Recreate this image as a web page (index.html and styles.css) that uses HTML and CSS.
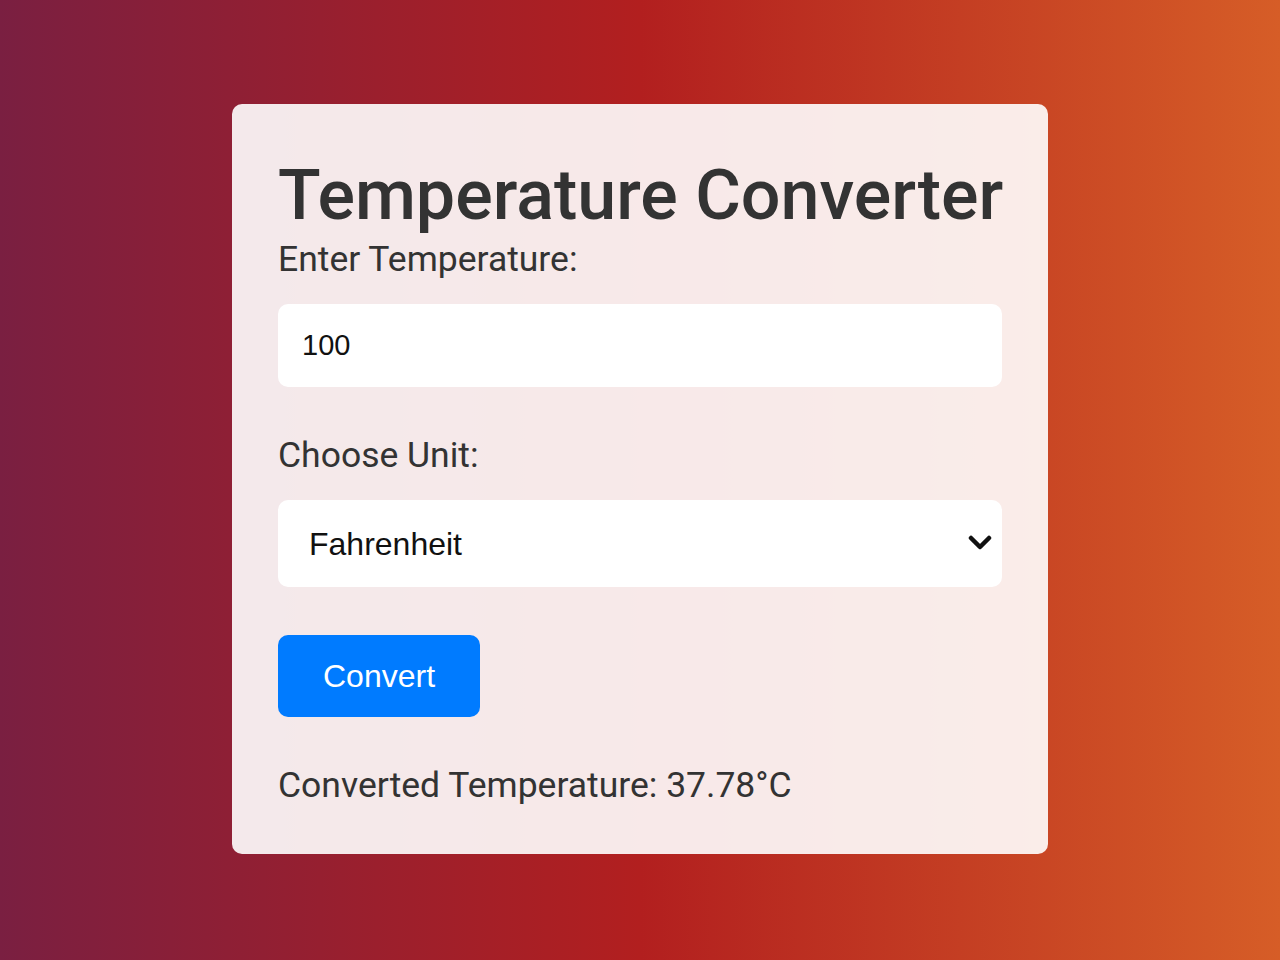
FILE: index.html
```html
<!DOCTYPE html>
<html lang="en">
<head>
    <meta charset="UTF-8">
    <meta name="viewport" content="width=device-width, initial-scale=1.0">
    <title>Temperature Converter</title>
    <link rel="stylesheet" href="styles.css">
</head>
<body>
    <div class="container">
        <h1>Temperature Converter</h1>
        <label for="temperature">Enter Temperature:</label>
        <input type="number" id="temperature" value="100">

        <label for="unit">Choose Unit:</label>
        <div class="select-wrap">
            <select id="unit">
                <option value="celsius">Celsius</option>
                <option value="fahrenheit" selected>Fahrenheit</option>
                <option value="kelvin">Kelvin</option>
            </select>
            <svg class="chevron" width="24" height="16" viewBox="0 0 24 16">
                <path d="M3 3 L12 12 L21 3" fill="none" stroke="#111" stroke-width="4.5" stroke-linecap="round" stroke-linejoin="round"/>
            </svg>
        </div>

        <button id="convert">Convert</button>

        <p id="result">Converted Temperature: 37.78°C</p>
    </div>
</body>
</html>
```

FILE: styles.css
```css
body {
    margin: 0;
    min-height: 960px;
    font-family: Roboto, "Liberation Sans", sans-serif;
    background: linear-gradient(to right, #7a1f41 0%, #b21f1f 50%, #d65d27 100%);
    color: #333;
}

.container {
    width: 724px;
    margin: 104px auto 0;
    padding: 48px 46px;
    background: rgba(255, 255, 255, 0.9);
    border-radius: 10px;
}

h1 {
    margin: 0;
    font-size: 70px;
    font-weight: 500;
    line-height: 87px;
    white-space: nowrap;
    color: #333;
}

label {
    display: block;
    font-size: 35.5px;
    line-height: 41px;
    margin-bottom: 24px;
}

input,
select {
    display: block;
    width: 100%;
    box-sizing: border-box;
    border: none;
    border-radius: 10px;
    background: white;
    color: #111;
    font-family: "Liberation Sans", Arial, sans-serif;
    margin-bottom: 48px;
}

input {
    height: 83px;
    padding: 0 24px;
    font-size: 29px;
}

.select-wrap {
    position: relative;
}

select {
    height: 87px;
    padding: 0 31px;
    font-size: 32px;
    appearance: none;
    -webkit-appearance: none;
}

.chevron {
    position: absolute;
    right: 10px;
    top: 35px;
    pointer-events: none;
}

button {
    display: block;
    padding: 0 45px;
    height: 82px;
    border: none;
    border-radius: 10px;
    background: #007bff;
    color: white;
    font-family: "Liberation Sans", Arial, sans-serif;
    font-size: 32px;
    cursor: pointer;
}

#result {
    margin: 48px 0 0;
    font-size: 35.5px;
    line-height: 41px;
}
```
